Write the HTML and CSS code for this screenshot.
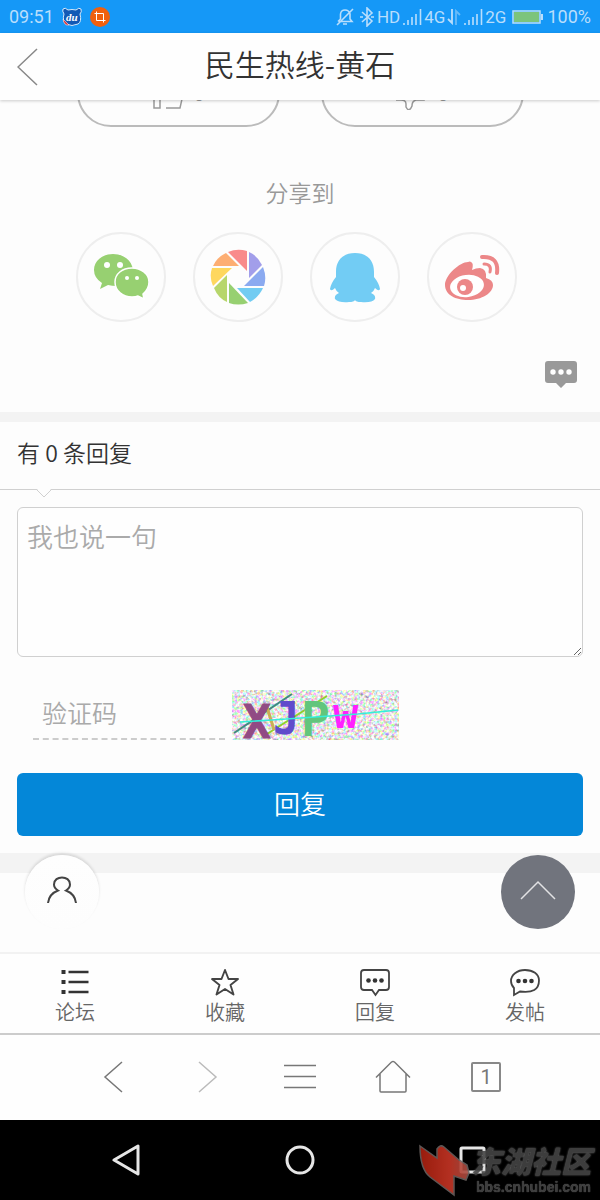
FILE: index.html
```html
<!DOCTYPE html>
<html lang="zh-CN">
<head>
<meta charset="utf-8">
<meta name="viewport" content="width=device-width">
<link rel="stylesheet" href="styles.css">
<title>民生热线-黄石</title>
</head>
<body>
<div class="status">
  <span class="time">09:51</span>
  <svg class="app" width="20" height="20" viewBox="0 0 20 20">
    <path d="M1 2q2-2 5 1q4-1 8 0q3-3 5-1q1 3-1 5q2 8-2 10q-6 3-12 0q-4-3-2-10q-2-3-1-5z" fill="#1259b5" stroke="#d6eafb"/>
    <path d="M1 12l6 6q-5 1-6-6z" fill="#d8343c" stroke="#fff" stroke-width=".5"/>
    <text class="du" x="4" y="14">du</text>
  </svg>
  <svg class="app" width="20" height="20" viewBox="0 0 20 20">
    <circle cx="10" cy="10" r="10" fill="#f0600e"/>
    <path d="M4.500 6.500H13.500V15.500M6.500 4.500V13.500H15.500" fill="none" stroke="#fff"/>
  </svg>
  <div class="signals">
    <svg class="bell" width="18" height="20" viewBox="0 0 18 20" fill="none" stroke="currentColor" stroke-width="1.600">
      <path d="M3 14.500H16L14 12V7Q13 3 9 3Q5 3 4.500 7V12L2 14.500M7 17h4M1 18L17 2"/>
    </svg>
    <svg class="bt" width="14" height="20" viewBox="0 0 14 20" fill="none" stroke="currentColor" stroke-width="1.600">
      <path d="M2 5L12 14L7 19V1L12 6L2 15M0 10h3M11 10h3"/>
    </svg>
    <span>HD</span>
    <svg class="bars" width="19" height="16" viewBox="0 0 19 16" stroke="currentColor" stroke-width="1.600"><path d="M1 16v-2M5 16v-5M9 16V8M13 16V5M17.500 16V0"/></svg>
    <span>4G</span>
    <svg class="updown" width="14" height="16" viewBox="0 0 14 16" fill="none" stroke="currentColor" stroke-width="1.800"><path d="M5 0V14L1 10"/><path d="M9 16V2l4 4" opacity=".5"/></svg>
    <svg class="bars" width="19" height="16" viewBox="0 0 19 16" stroke="currentColor" stroke-width="1.600"><path d="M1 16v-2M5 16v-5M9 16V8M13 16V5M17.500 16V0"/></svg>
    <span>2G</span>
    <svg class="battery" width="31" height="14" viewBox="0 0 31 14"><path d="M1 1h27v12H1z" fill="none" stroke="#b9defc" stroke-width="1.500"/><path d="M2 2h25v10H2z" fill="#7cc47c"/><path d="M29 4h2v6h-2z" fill="#b9defc"/></svg>
    <span class="time">100%</span>
  </div>
</div>

<header class="header">
  <a class="back" href="#" aria-label="返回"><svg width="22" height="38" viewBox="0 0 22 38"><path d="M20 1L1 19L20 37" fill="none" stroke="#888" stroke-width="1.500"/></svg></a>
  <h1>民生热线-黄石</h1>
</header>

<main>
  <section class="article-end">
    <div class="votes">
      <button type="button"><svg width="34" height="34" viewBox="0 0 34 34" fill="none" stroke="#999" stroke-width="1.500"><path d="M3 14h6v18H3zM15 32h14l4-18H21l1-9q-4-6-5 2l-4 7"/></svg><span>0</span></button>
      <button type="button"><svg width="34" height="34" viewBox="0 0 34 34" fill="none" stroke="#999" stroke-width="1.500"><path d="M1 2h6v22H1M6 24q5 0 5 4v3q3 6 6-1q0-5 4-6h8L27 2H12"/></svg><span>0</span></button>
    </div>
    <h2 class="share-title">分享到</h2>
    <div class="share">
      <a href="#" aria-label="微信">
        <svg width="56" height="56" viewBox="0 0 56 56">
          <path d="M20 5C9 5 1 12 1 21q0 8 8 13l-2 6l8-4q4 1 9 1C37 35 40 28 40 21C39 11 30 5 20 5z" fill="#97d071"/>
          <path d="M39 19C29 19 22 25 22 33C22 42 30 48 39 48q4 0 6-1l6 3l-1-5Q56 40 56 33C56 25 48 19 39 19z" fill="#97d071" stroke="#fff" stroke-width="1.500"/>
          <g fill="#fff"><circle cx="14" cy="16" r="3"/><circle cx="27" cy="16" r="3"/><circle cx="34" cy="29" r="2"/><circle cx="44" cy="29" r="2"/></g>
        </svg>
      </a>
      <a href="#" aria-label="朋友圈">
        <svg width="56" height="56" viewBox="0 0 56 56">
          <path d="M18 3Q27-1 37 2V22z" fill="#f98b8b"/>
          <path d="M39 3Q48 7 52 16L39 29z" fill="#a29eea"/>
          <path d="M53 18Q57 28 54 37H34z" fill="#8baaf0"/>
          <path d="M53 39Q49 48 40 53L27 39z" fill="#72ccf2"/>
          <path d="M38 54Q28 57 19 54V34z" fill="#97d071"/>
          <path d="M17 53Q8 49 4 39L17 26z" fill="#b7d66c"/>
          <path d="M3 37Q-1 28 2 19H22z" fill="#fed75e"/>
          <path d="M3 17Q7 8 16 4L29 17z" fill="#fdae73"/>
        </svg>
      </a>
      <a href="#" aria-label="QQ">
        <svg width="56" height="56" viewBox="0 0 56 56">
          <path d="M28 4C15 4 9 12 9 23V28Q4 34 3 40q1 3 5-1q1 3 4 5q-5 2-4 6q4 4 14 3q5 0 6-2q1 2 6 2q11 1 14-3q1-4-4-6q3-2 4-5q4 4 5 1Q52 34 47 28V23C47 12 41 4 28 4z" fill="#72ccf4"/>
        </svg>
      </a>
      <a href="#" aria-label="微博">
        <svg width="56" height="56" viewBox="0 0 56 56">
          <path d="M24 13C16 13 1 26 1 36C1 46 12 51 24 51C38 51 49 44 49 36Q49 31 42 29Q43 20 36 19Q32 19 28 21Q30 14 27 13Q26 12 24 13z" fill="#ec8788"/>
          <ellipse cx="23" cy="37" rx="17" ry="11" fill="#fff" transform="rotate(-7 23 37)"/>
          <circle cx="21" cy="38" r="8" fill="#ec8788"/><circle cx="19" cy="39" r="3" fill="#fff"/>
          <path d="M38 8Q55 7 53 24" fill="none" stroke="#ec8788" stroke-width="4" stroke-linecap="round"/>
          <path d="M40 15Q48 15 46 23" fill="none" stroke="#ec8788" stroke-width="3" stroke-linecap="round"/>
        </svg>
      </a>
    </div>
    <a class="comment" href="#reply" aria-label="评论"><svg width="32" height="28" viewBox="0 0 32 28"><path d="M3 0H29q3 0 3 3V19q0 3-3 3H21l-5 5l-5-5H3q-3 0-3-3V3q0-3 3-3z" fill="#999"/><g fill="#fff"><circle cx="8" cy="11" r="2.700"/><circle cx="16" cy="11" r="2.700"/><circle cx="24" cy="11" r="2.700"/></g></svg></a>
  </section>

  <h2 class="replies">有 0 条回复
    <svg class="notch" width="16" height="9" viewBox="0 0 16 9"><path d="M1 0H15L8 8z" fill="#fdfdfd"/><path d="M1 1L8 8L15 1" fill="none" stroke="#d0d0d0"/></svg>
  </h2>

  <form class="reply" id="reply">
    <textarea aria-label="回复内容" placeholder="我也说一句"></textarea>
    <div class="verify">
      <input type="text" aria-label="验证码" placeholder="验证码">
      <svg class="captcha" width="167" height="50" viewBox="0 0 167 50">
        <filter id="noise" x="0" y="0" width="100%" height="100%" color-interpolation-filters="sRGB">
          <feTurbulence type="fractalNoise" baseFrequency=".35" numOctaves="2" seed="4"/>
          <feColorMatrix values="1.1 0 0 0 .35  0 1.1 0 0 .35  0 0 1.1 0 .35  0 0 0 0 1"/>
        </filter>
        <rect width="167" height="50" filter="url(#noise)"/>
        <path d="M2 43L60 4" stroke="#408980" stroke-width="2"/>
        <path d="M35 44L95 6" stroke="#90cf2c" stroke-width="2"/>
        <path d="M35 17L42 40" stroke="#cbae55" stroke-width="3"/>
        <g class="code">
          <text x="11" y="48" font-size="46" fill="#914b84" stroke="#914b84">X</text>
          <text x="41" y="44" font-size="44" fill="#604bcb">J</text>
          <text x="69" y="46" font-size="48" fill="#62c57c">P</text>
          <text x="101" y="38" font-size="42" fill="#ff20ff">w</text>
        </g>
        <path d="M8 32L40 30L126 24L166 20" fill="none" stroke="#35efd8" stroke-width="1.500"/>
      </svg>
    </div>
    <button type="submit">回复</button>
  </form>

  <section class="page-end">
    <a class="float user" href="#" aria-label="我的"><svg width="32" height="30" viewBox="0 0 32 30"><path d="M2 28Q3 19 12 15.500Q8 13 8 9.500C8 0 24 0 24 9.500Q24 13 20 15.500Q29 19 30 28" fill="none" stroke="#444" stroke-width="2"/></svg></a>
    <a class="float top" href="#" aria-label="回到顶部"><svg width="38" height="22" viewBox="0 0 38 22"><path d="M2 20L19 3L36 20" fill="none" stroke="#e2e2e4" stroke-width="1.500"/></svg></a>
  </section>
</main>

<nav class="tabs">
  <a href="#"><svg width="30" height="30" viewBox="0 0 30 30" stroke="#333" stroke-width="2.500"><path d="M8.500 5H28.500M8.500 15H28.500M8.500 25H28.500"/><path d="M1.500 5h4M1.500 15h4M1.500 25h4" stroke-width="4"/></svg>论坛</a>
  <a href="#"><svg width="30" height="30" viewBox="0 0 30 30"><path d="M15 3L18.500 12H28L20.500 18L23.500 27.500L15 22L6.500 27.500L9.500 18L2 12H11.500z" fill="none" stroke="#444" stroke-width="1.900" stroke-linejoin="round"/></svg>收藏</a>
  <a href="#"><svg width="30" height="30" viewBox="0 0 30 30"><path d="M4 3H26q3 0 3 3V20q0 3-3 3H19L15.500 28L12 23H4q-3 0-3-3V6q0-3 3-3z" fill="none" stroke="#444" stroke-width="1.800"/><g fill="#333"><circle cx="8.500" cy="13.500" r="2.300"/><circle cx="15" cy="13.500" r="2.300"/><circle cx="21.500" cy="13.500" r="2.300"/></g></svg>回复</a>
  <a href="#"><svg width="30" height="30" viewBox="0 0 30 30"><path d="M15 3C7 3 1 8 1 14Q1 18 4 21L4 28L10 24.500Q29 27 29 13.500C29 7 23 3 15 3z" fill="none" stroke="#444" stroke-width="1.800"/><g fill="#333"><circle cx="8.500" cy="14" r="2.300"/><circle cx="15" cy="14" r="2.300"/><circle cx="21.500" cy="14" r="2.300"/></g></svg>发帖</a>
</nav>

<nav class="browser">
  <button type="button" aria-label="后退"><svg width="36" height="36" viewBox="0 0 36 36"><path d="M26 3L9 18L26 33"/></svg></button>
  <button type="button" aria-label="前进"><svg class="off" width="36" height="36" viewBox="0 0 36 36"><path d="M10 3L27 18L10 33"/></svg></button>
  <button type="button" aria-label="菜单"><svg width="36" height="36" viewBox="0 0 36 36"><path d="M2 6.500H34M2 17.500H34M2 28.500H34"/></svg></button>
  <button type="button" aria-label="主页"><svg width="36" height="36" viewBox="0 0 36 36"><path d="M1 18.500L16.500 3q1.500-1 3 0L35 18.500M5 15V32q0 1 1 1H30q1 0 1-1V15"/></svg></button>
  <button type="button" class="count" aria-label="窗口"><span>1</span></button>
</nav>

<div class="system">
  <button type="button" aria-label="返回键"><svg width="32" height="32" viewBox="0 0 32 32"><path d="M3 16L27 2V30z"/></svg></button>
  <button type="button" aria-label="主屏键"><svg width="32" height="32" viewBox="0 0 32 32"><circle cx="16" cy="16" r="13"/></svg></button>
  <button type="button" aria-label="最近任务"><svg width="32" height="32" viewBox="0 0 32 32"><rect x="4" y="4" width="23" height="24" rx="1"/></svg></button>
  <div class="watermark">
    <svg width="54" height="54" viewBox="0 0 54 54">
      <defs><linearGradient id="red"><stop offset="0" stop-color="#a91f0e"/><stop offset=".6" stop-color="#c73525"/><stop offset="1" stop-color="#a65045"/></linearGradient></defs>
      <path d="M3 3L20 15V6Q23 1 27 4L42 17L50 22L52 30L49 37L37 33V52L13 34Q3 26 3 3z" fill="url(#red)" stroke="#69605e" stroke-width="1.500"/>
    </svg>
    <div class="site"><strong>东湖社区</strong><span>bbs.cnhubei.com</span></div>
  </div>
</div>
</body>
</html>
```
FILE: styles.css
```css
* { box-sizing: border-box; }
body {
  margin: 0;
  min-height: 100vh;
  display: flex;
  flex-direction: column;
  background: #fdfdfd;
  color: #333;
  font-family: "Noto Sans CJK SC", sans-serif;
  font-weight: 350;
}
h1, h2 { margin: 0; font-weight: inherit; }
a { color: inherit; text-decoration: none; }
button { padding: 0; border: 0; background: none; font: inherit; color: inherit; }
svg { display: block; flex: none; }

/* phone status bar */
.status {
  display: flex;
  align-items: center;
  height: 33px;
  padding: 0 9px;
  background: #1598f7;
  color: #b9defc;
  font: 17px Roboto, sans-serif;
}
.time { font-size: 18px; }
.app { margin-left: 8px; }
.du { font: italic bold 11px "Liberation Serif", serif; fill: #fff; }
.signals {
  display: flex;
  align-items: center;
  gap: 2px;
  margin-left: auto;
}
.bt { margin: 0 1px 0 4px; }
.bars { margin-left: 1px; }
.battery { margin: 0 2px 0 4px; }

/* title bar */
.header {
  position: relative;
  z-index: 1;
  display: flex;
  align-items: center;
  height: 67px;
  padding: 0 17px;
  background: #fefefe;
  box-shadow: 0 1px 3px rgba(0,0,0,0.2);
}
.back { width: 22px; }
.header h1 {
  flex: 1;
  padding: 0 22px 8px 0;
  text-align: center;
  font-size: 30px;
  line-height: 56px;
}

main { flex: 1; }
.article-end { border-bottom: 10px solid #f3f3f3; }
.votes {
  display: flex;
  justify-content: center;
  align-items: flex-end;
  gap: 41px;
  height: 27px;
  overflow: hidden;
}
.votes button {
  display: flex;
  flex: none;
  justify-content: center;
  align-items: center;
  gap: 8px;
  width: 203px;
  height: 68px;
  border: 2px solid #bbb;
  border-radius: 34px;
  color: #999;
  font-size: 23px;
}
.votes span { padding-bottom: 4px; }
.share-title {
  margin-top: 47px;
  color: #999;
  font-size: 23px;
  line-height: 36px;
  text-align: center;
}
.share {
  display: flex;
  justify-content: center;
  gap: 27px;
  margin-top: 22px;
  padding-right: 8px;
}
.share a {
  display: flex;
  justify-content: center;
  align-items: center;
  width: 90px;
  height: 90px;
  border: 2px solid #eee;
  border-radius: 50%;
}
.comment {
  display: flex;
  justify-content: flex-end;
  padding: 39px 23px 23px;
}

/* reply form */
.replies {
  position: relative;
  height: 68px;
  padding: 0 17px;
  border-bottom: 1px solid #d0d0d0;
  font-size: 23px;
  line-height: 60px;
}
.notch {
  position: absolute;
  left: 36px;
  top: 67px;
}
.reply { padding: 17px; }
.reply textarea {
  display: block;
  width: 100%;
  height: 150px;
  padding: 9px;
  border: 1px solid #d0d0d0;
  border-radius: 6px;
  background: #fefefe;
  font: 350 26px/38px "Noto Sans CJK SC", sans-serif;
}
.verify {
  display: flex;
  align-items: flex-end;
  gap: 7px;
  margin: 33px 16px;
}
.verify input {
  width: 192px;
  height: 50px;
  padding: 0 9px 4px;
  border: 0;
  border-bottom: 2px dashed #ccc;
  background: none;
  font: 350 25px "Noto Sans CJK SC", sans-serif;
}
::placeholder { color: #aaa; }
.code { font-family: "DejaVu Sans Mono", monospace; font-weight: bold; }
.reply button {
  display: block;
  width: 100%;
  height: 63px;
  padding-bottom: 4px;
  border-radius: 6px;
  background: #0487d8;
  color: #fff;
  font-size: 26px;
}
.page-end {
  position: relative;
  height: 99px;
  border-top: 20px solid #f3f3f3;
}
.float {
  position: absolute;
  top: -18px;
  display: flex;
  justify-content: center;
  align-items: center;
  width: 74px;
  height: 74px;
  padding-bottom: 4px;
  border-radius: 50%;
}
.user {
  left: 25px;
  background: linear-gradient(#fefefe, #fdfdfd);
  box-shadow: 0 -2px 3px rgba(0,0,0,0.12);
}
.top { right: 25px; background: #71747d; }

/* bottom bars */
.tabs {
  display: flex;
  height: 83px;
  padding-top: 13px;
  border-top: 2px solid #f2f2f2;
  border-bottom: 2px solid #ccc;
  background: #fefefe;
}
.tabs a {
  flex: 1;
  display: flex;
  flex-direction: column;
  align-items: center;
  color: #666;
  font-size: 20px;
  line-height: 30px;
}
.browser {
  display: flex;
  justify-content: center;
  align-items: center;
  gap: 57px;
  height: 85px;
  padding-bottom: 2px;
  background: #fefefe;
}
.browser svg { fill: none; stroke: #777; stroke-width: 1.5; }
.browser .off { stroke: #bbb; }
.count {
  display: flex;
  justify-content: center;
  width: 36px;
}
.count span {
  width: 30px;
  height: 30px;
  border: 2px solid #888;
  border-radius: 2px;
  color: #777;
  font: 20px/27px Roboto, sans-serif;
}
.system {
  position: relative;
  display: flex;
  justify-content: center;
  align-items: center;
  gap: 141px;
  height: 80px;
  background: #000;
}
.system button svg { fill: none; stroke: #e6e6e6; stroke-width: 3; stroke-linejoin: round; }
.watermark {
  position: absolute;
  right: 9px;
  bottom: 3px;
  display: flex;
  opacity: 0.9;
}
.site {
  display: flex;
  flex-direction: column;
  align-items: flex-end;
  color: #444;
}
.site strong {
  font-size: 30px;
  font-style: italic;
  font-weight: 900;
  line-height: 34px;
  text-shadow: 0 0 2px #888;
}
.site span {
  font: bold 14px/20px "Liberation Sans", sans-serif;
  text-shadow: 0 0 1px #888;
}
```
